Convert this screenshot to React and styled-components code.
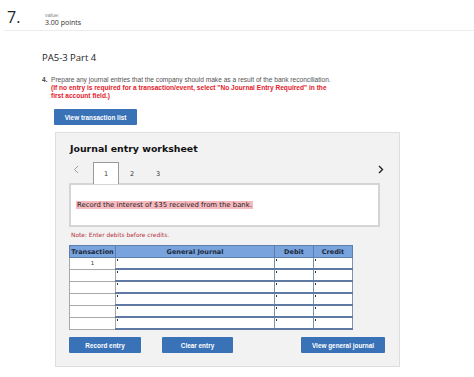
import React from "react";
import styled, { createGlobalStyle } from "styled-components";

const GlobalStyle = createGlobalStyle`
  html, body {
    margin: 0;
    padding: 0;
    background: #fff;
  }
  body {
    font-family: "Liberation Sans", Arial, sans-serif;
    color: #333;
  }
`;

const Page = styled.div`
  width: 474px;
  height: 377px;
  overflow: hidden;
`;

const TopBar = styled.div`
  display: flex;
  align-items: flex-start;
  height: 30px;
  margin-left: 4px;
  border-bottom: 1px solid #ececec;
`;

const Number = styled.div`
  width: 38px;
  padding: 7px 0 0 3px;
  font-family: "Open Sans", sans-serif;
  font-size: 16px;
  line-height: 20px;
  color: #222;
`;

const Meta = styled.div`
  padding-top: 12px;
  display: flex;
  flex-direction: column;
`;

const MetaLabel = styled.span`
  font-size: 5.5px;
  line-height: 6px;
  color: #888;
`;

const MetaValue = styled.span`
  font-family: "Open Sans", sans-serif;
  font-size: 7px;
  line-height: 9px;
  color: #333;
`;

const Body = styled.div`
  padding-left: 42px;
`;

const PartTitle = styled.div`
  margin-top: 20px;
  font-family: "Open Sans", sans-serif;
  font-size: 9.5px;
  line-height: 14px;
  color: #222;
`;

const Question = styled.div`
  display: flex;
  margin-top: 11px;
  font-size: 6.6px;
  line-height: 8px;
  color: #555;
`;

const QNum = styled.span`
  width: 9px;
  font-weight: bold;
  color: #444;
`;

const Warn = styled.span`
  display: block;
  color: #e3202a;
  font-weight: bold;
  width: 286px;
`;

const Button = styled.button`
  display: flex;
  align-items: center;
  justify-content: center;
  width: ${(p) => p.$w}px;
  height: 16px;
  margin: 0;
  padding: 0;
  border: none;
  border-radius: 1px;
  background: #3a72b8;
  color: #fff;
  font-family: "Liberation Sans", Arial, sans-serif;
  font-weight: bold;
  font-size: 6.4px;
`;

const TopButtonRow = styled.div`
  margin: 9px 0 0 12px;
`;

const Panel = styled.div`
  margin: 7px 0 0 55px;
  width: 330px;
  height: 233px;
  background: #f2f2f2;
  border: 1px solid #dedede;
  padding: 0 0 0 13px;
  font-family: "DejaVu Sans", Verdana, sans-serif;
`;

const PanelTitle = styled.div`
  margin-top: 9px;
  padding-left: 1px;
  font-weight: bold;
  font-size: 9.4px;
  line-height: 14px;
  color: #111;
`;

const TabRow = styled.div`
  display: flex;
  align-items: flex-end;
  width: 315px;
  height: 22px;
  margin-top: 5px;
`;

const Arrow = styled.span`
  display: flex;
  align-items: center;
  height: 16px;
  width: ${(p) => p.$w || 15}px;
  padding-left: ${(p) => p.$pl || 0}px;
  margin-bottom: 6px;
  margin-left: ${(p) => (p.$auto ? "auto" : "0")};
`;

const Tab = styled.div`
  width: 26px;
  height: 22px;
  display: flex;
  align-items: center;
  justify-content: center;
  box-sizing: border-box;
  font-size: 6.5px;
  color: #333;
  background: ${(p) => (p.$active ? "#fff" : "transparent")};
  border: 1px solid ${(p) => (p.$active ? "#9a9a9a" : "transparent")};
  border-bottom: none;
  position: relative;
  z-index: 1;
  margin-bottom: -1px;
`;

const Prompt = styled.div`
  width: 311px;
  height: 44px;
  box-sizing: border-box;
  background: #fff;
  border: 2px solid #d4d4d4;
  padding: 7px 5px;
`;

const Highlight = styled.span`
  background: #f8b9be;
  font-size: 6.9px;
  line-height: 8px;
  color: #222;
  padding: 0 1px;
`;

const Note = styled.div`
  margin-top: 4px;
  font-size: 5.9px;
  line-height: 8px;
  color: #b4343e;
  padding-left: 2px;
`;

const Table = styled.table`
  margin-top: 6px;
  border-collapse: collapse;
  table-layout: fixed;
  width: 283px;
`;

const Th = styled.th`
  width: ${(p) => p.$w}px;
  height: 12px;
  padding: 0;
  background: #79a3dc;
  border: 1px solid #5b7fae;
  font-size: 6.5px;
  line-height: 8px;
  font-weight: bold;
  color: #1c2a3d;
  text-align: center;
  box-sizing: border-box;
`;

const Td = styled.td`
  height: 10px;
  padding: 0;
  background: #fff;
  border: 1px solid #a8a8a8;
  font-size: 5.5px;
  line-height: 6px;
  text-align: center;
  color: #333;
`;

const InputTd = styled.td`
  height: 10px;
  padding: 0;
  line-height: 0;
  background: #fff;
  border: 1px solid #7f93b0;
  border-bottom: 2px solid #5e7aa4;
  border-left: 1px solid #3f4e66;
  position: relative;

  &::before {
    content: "";
    position: absolute;
    left: 1px;
    top: 1px;
    width: 1px;
    height: 2px;
    background: #2b3240;
  }
`;

const BottomRow = styled.div`
  display: flex;
  width: 316px;
  margin-top: 7px;
  gap: 21px;

  & > :last-child {
    margin-left: auto;
  }
`;

const Chevron = ({ dir, color }) => (
  <svg width="6" height="9" viewBox="0 0 6 9">
    <path
      d={dir === "left" ? "M5 1 L1.5 4.5 L5 8" : "M1 1 L4.5 4.5 L1 8"}
      fill="none"
      stroke={color}
      strokeWidth={dir === "left" ? 1 : 1.4}
    />
  </svg>
);

const rows = [1, "", "", "", "", ""];

export default function App() {
  return (
    <Page>
      <GlobalStyle />
      <TopBar>
        <Number>7.</Number>
        <Meta>
          <MetaLabel>value:</MetaLabel>
          <MetaValue>3.00 points</MetaValue>
        </Meta>
      </TopBar>
      <Body>
        <PartTitle>PA5-3 Part 4</PartTitle>
        <Question>
          <QNum>4.</QNum>
          <div>
            Prepare any journal entries that the company should make as a result of the bank reconciliation.
            <Warn>
              (If no entry is required for a transaction/event, select "No Journal Entry Required" in the first account field.)
            </Warn>
          </div>
        </Question>
        <TopButtonRow>
          <Button $w={83}>View transaction list</Button>
        </TopButtonRow>
      </Body>
      <Panel>
        <PanelTitle>Journal entry worksheet</PanelTitle>
        <TabRow>
          <Arrow $pl={4} $w={20}>
            <Chevron dir="left" color="#9a9a9a" />
          </Arrow>
          <Tab $active>1</Tab>
          <Tab>2</Tab>
          <Tab>3</Tab>
          <Arrow $auto $w={6}>
            <Chevron dir="right" color="#222" />
          </Arrow>
        </TabRow>
        <Prompt>
          <Highlight>Record the interest of $35 received from the bank.</Highlight>
        </Prompt>
        <Note>Note: Enter debits before credits.</Note>
        <Table>
          <colgroup>
            <col style={{ width: 46 }} />
            <col style={{ width: 159 }} />
            <col style={{ width: 39 }} />
            <col style={{ width: 39 }} />
          </colgroup>
          <thead>
            <tr>
              <Th>Transaction</Th>
              <Th>General Journal</Th>
              <Th>Debit</Th>
              <Th>Credit</Th>
            </tr>
          </thead>
          <tbody>
            {rows.map((r, i) => (
              <tr key={i}>
                <Td>{r}</Td>
                <InputTd />
                <InputTd />
                <InputTd />
              </tr>
            ))}
          </tbody>
        </Table>
        <BottomRow>
          <Button $w={72}>Record entry</Button>
          <Button $w={71}>Clear entry</Button>
          <Button $w={84}>View general journal</Button>
        </BottomRow>
      </Panel>
    </Page>
  );
}
